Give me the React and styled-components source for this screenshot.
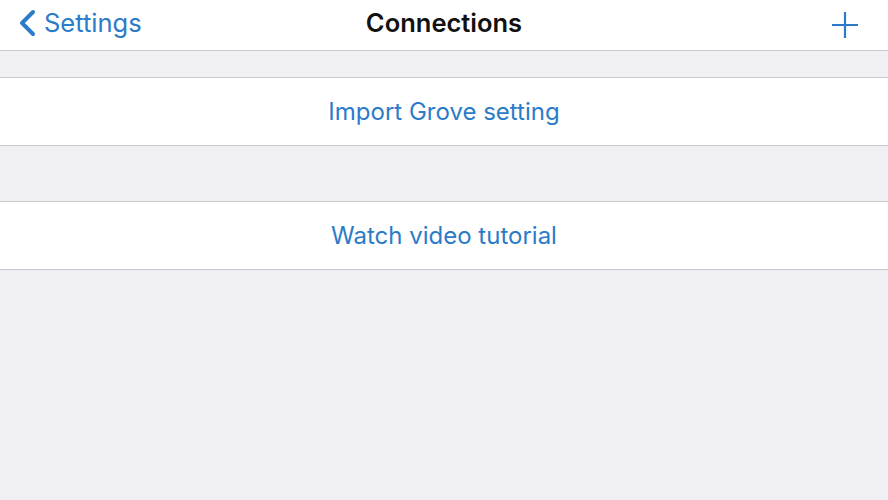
import React from 'react'
import styled, { createGlobalStyle } from 'styled-components'

const colors = {
  tint: '#2b7bc8',
  background: '#efeff4',
  separator: '#c8c7cc',
  white: '#ffffff',
  text: '#111111',
}

const GlobalStyle = createGlobalStyle`
  html, body {
    margin: 0;
    padding: 0;
    background: ${colors.background};
    font-family: Inter, 'Noto Sans', sans-serif;
  }
`

const Screen = styled.div`
  width: 888px;
  height: 500px;
  background: ${colors.background};
  overflow: hidden;
`

const NavBar = styled.header`
  height: 51px;
  display: grid;
  grid-template-columns: 1fr auto 1fr;
  align-items: center;
  padding-bottom: 5px;
  box-sizing: border-box;
  background: ${colors.white};
  border-bottom: 1px solid ${colors.separator};
`

const BackButton = styled.div`
  display: flex;
  align-items: center;
  gap: 6px;
  padding-left: 18px;
  color: ${colors.tint};
  font-size: 25.5px;
`

const Title = styled.h1`
  margin: 0;
  font-size: 25.5px;
  font-weight: 600;
  color: ${colors.text};
`

const AddButton = styled.div`
  display: flex;
  justify-content: flex-end;
  padding-right: 30px;
  padding-top: 4px;
`

const Group = styled.section`
  margin-top: ${(p) => p.gap}px;
  background: ${colors.white};
  border-top: 1px solid ${colors.separator};
  border-bottom: 1px solid ${colors.separator};
`

const Action = styled.div`
  height: 67px;
  display: flex;
  align-items: center;
  justify-content: center;
  color: ${colors.tint};
  font-size: 24px;
`

const Chevron = () => (
  <svg width="20" height="28" viewBox="0 0 20 28">
    <path
      d="M15 3 L4 14 L15 25"
      fill="none"
      stroke={colors.tint}
      strokeWidth="4"
      strokeLinecap="round"
      strokeLinejoin="round"
    />
  </svg>
)

const Plus = () => (
  <svg width="26" height="26" viewBox="0 0 26 26">
    <path d="M13 0 V26 M0 13 H26" stroke={colors.tint} strokeWidth="2.2" />
  </svg>
)

const App = () => (
  <Screen>
    <GlobalStyle />
    <NavBar>
      <BackButton>
        <Chevron />
        Settings
      </BackButton>
      <Title>Connections</Title>
      <AddButton>
        <Plus />
      </AddButton>
    </NavBar>
    <Group gap={26}>
      <Action>Import Grove setting</Action>
    </Group>
    <Group gap={55}>
      <Action>Watch video tutorial</Action>
    </Group>
  </Screen>
)

export default App
